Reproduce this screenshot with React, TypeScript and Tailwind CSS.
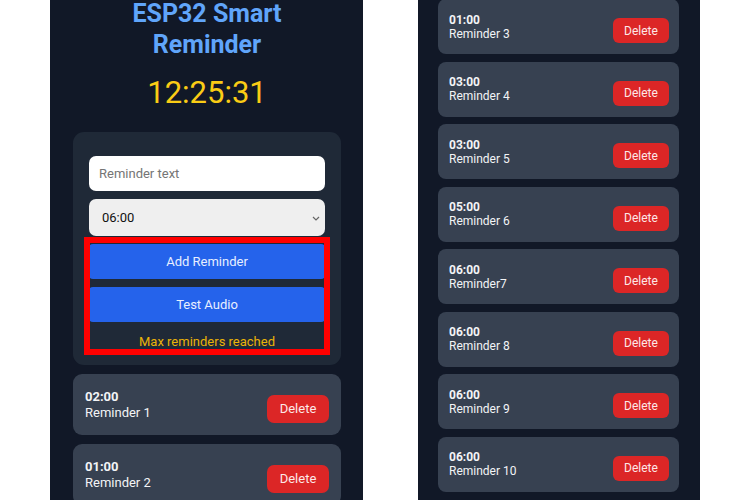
import React from "react";

type R = { time: string; name: string };

const leftItems: R[] = [
  { time: "02:00", name: "Reminder 1" },
  { time: "01:00", name: "Reminder 2" },
];

const rightItems: R[] = [
  { time: "01:00", name: "Reminder 3" },
  { time: "03:00", name: "Reminder 4" },
  { time: "03:00", name: "Reminder 5" },
  { time: "05:00", name: "Reminder 6" },
  { time: "06:00", name: "Reminder7" },
  { time: "06:00", name: "Reminder 8" },
  { time: "06:00", name: "Reminder 9" },
  { time: "06:00", name: "Reminder 10" },
];

function LeftCard({ r }: { r: R }) {
  return (
    <div className="flex h-[61px] shrink-0 items-center justify-between rounded-[9px] bg-[#374151] pl-[12px] pr-[12px]">
      <div className="flex flex-col text-[13px] leading-[16px] text-[#f3f4f6]">
        <span className="font-bold">{r.time}</span>
        <span>{r.name}</span>
      </div>
      <button className="mt-[9px] flex h-[28px] w-[62px] items-center justify-center rounded-[7px] bg-[#dc2626] text-[13px] text-[#fde8e8]">
        Delete
      </button>
    </div>
  );
}

function RightCard({ r }: { r: R }) {
  return (
    <div className="flex h-[55px] shrink-0 items-center justify-between rounded-[8px] bg-[#374151] pl-[11px] pr-[10px]">
      <div className="flex flex-col text-[12px] leading-[14px] text-[#f3f4f6]">
        <span className="font-bold">{r.time}</span>
        <span>{r.name}</span>
      </div>
      <button className="mt-[8px] flex h-[25px] w-[56px] items-center justify-center rounded-[6px] bg-[#dc2626] text-[12px] text-[#fde8e8]">
        Delete
      </button>
    </div>
  );
}

export default function App() {
  return (
    <div
      className="flex h-[500px] w-[750px] overflow-hidden bg-white"
      style={{ fontFamily: "Roboto, 'Noto Sans', sans-serif" }}
    >
      {/* Left phone */}
      <div className="ml-[50px] flex h-[500px] w-[313px] shrink-0 flex-col overflow-hidden bg-[#111827] pl-[23px] pr-[22px]">
        <h1 className="mt-[-2px] text-center text-[25px] font-bold leading-[31px] text-[#60a5fa]">
          ESP32 Smart
          <br />
          Reminder
        </h1>
        <div className="mt-[15px] text-center text-[31px] leading-[36px] text-[#facc15]">
          12:25:31
        </div>
        <div className="relative mt-[21px] flex shrink-0 flex-col rounded-[11px] bg-[#1f2937] px-[16px] pb-[13px] pt-[24px]">
          <div className="flex h-[35px] items-center rounded-[7px] bg-white pl-[10px] text-[13px] text-[#757575]">
            Reminder text
          </div>
          <div className="mt-[8px] flex h-[37px] items-center justify-between rounded-[7px] bg-[#efefef] pl-[13px] pr-[4px] text-[13px] text-[#111]">
            <span>06:00</span>
            <svg width="10" height="10" viewBox="0 0 10 10">
              <path d="M2 4 L5 7 L8 4" fill="none" stroke="#666" strokeWidth="1.2" />
            </svg>
          </div>
          <button className="mt-[8px] flex h-[35px] items-center justify-center rounded-[4px] bg-[#2563eb] text-[13px] text-[#e8efff]">
            Add Reminder
          </button>
          <button className="mt-[8px] flex h-[35px] items-center justify-center rounded-[4px] bg-[#2563eb] text-[13px] text-[#e8efff]">
            Test Audio
          </button>
          <div className="mt-[10px] text-center text-[13px] leading-[20px] text-[#eab308]">
            Max reminders reached
          </div>
          <div className="absolute left-[11px] top-[105px] h-[118px] w-[246px] border-[6px] border-[#ff0000]" />
        </div>
        <div className="mt-[9px] flex flex-col gap-[9px]">
          {leftItems.map((r) => (
            <LeftCard key={r.name} r={r} />
          ))}
        </div>
      </div>

      {/* Right phone */}
      <div className="ml-[55px] flex h-[500px] w-[282px] shrink-0 flex-col overflow-hidden bg-[#111827] pl-[20px] pr-[21px]">
        <div className="mt-[-1px] flex flex-col gap-[7.5px]">
          {rightItems.map((r) => (
            <RightCard key={r.name} r={r} />
          ))}
        </div>
      </div>
    </div>
  );
}
